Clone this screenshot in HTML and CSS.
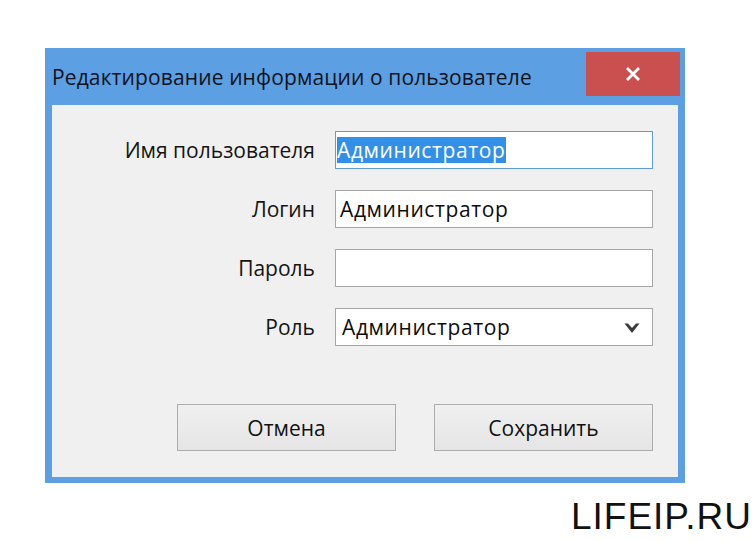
FILE: index.html
```html
<!DOCTYPE html>
<html lang="ru">
<head>
<meta charset="utf-8">
<title>Редактирование информации о пользователе</title>
<link rel="stylesheet" href="styles.css">
</head>
<body>
<div class="window">
  <div class="titlebar">
    <span class="title">Редактирование информации о пользователе</span>
    <div class="close">
      <svg width="14" height="14" viewBox="0 0 14 14"><path d="M2 2 L12 12 M12 2 L2 12" stroke="#ffffff" stroke-width="2.8" stroke-linecap="square" fill="none"/></svg>
    </div>
  </div>
  <div class="client">
    <div class="form">
      <div class="lbl">Имя пользователя</div>
      <div class="field focus"><span class="sel">Администратор</span></div>
      <div class="lbl">Логин</div>
      <div class="field"><span class="val">Администратор</span></div>
      <div class="lbl">Пароль</div>
      <div class="field"></div>
      <div class="lbl">Роль</div>
      <div class="field combo"><span class="val">Администратор</span>
        <svg class="chev" width="16" height="12" viewBox="0 0 16 12"><polygon points="0.5,1.5 4,1.5 8,6 12,1.5 15.5,1.5 8,11" fill="#3c3c3c"/></svg>
      </div>
    </div>
    <div class="buttons">
      <div class="btn">Отмена</div>
      <div class="btn">Сохранить</div>
    </div>
  </div>
</div>
<div class="watermark">LIFEIP.RU</div>
</body>
</html>
```
FILE: styles.css
```css
html, body {
  margin: 0;
  padding: 0;
}
body {
  background: #ffffff;
  font-family: "Open Sans", "Noto Sans", sans-serif;
  width: 752px;
  height: 540px;
  overflow: hidden;
}
.window {
  margin: 48px 0 0 45px;
  width: 640px;
  height: 435px;
  box-sizing: border-box;
  background: #5c9fe2;
  padding: 0 7px 6px 7px;
  display: flex;
  flex-direction: column;
}
.titlebar {
  height: 57px;
  flex: none;
  display: flex;
  align-items: flex-start;
  justify-content: space-between;
}
.title {
  margin-top: 15px;
  font-size: 21px;
  line-height: 28px;
  letter-spacing: 0.12px;
  color: #10131c;
  white-space: nowrap;
}
.close {
  margin-top: 4px;
  margin-right: -2px;
  width: 94px;
  height: 44px;
  background: #c9504e;
  display: flex;
  align-items: center;
  justify-content: center;
}
.client {
  flex: 1;
  background: #f0f0f0;
  padding-top: 26px;
  display: flex;
  flex-direction: column;
}
.form {
  display: grid;
  grid-template-columns: 263px 318px;
  grid-auto-rows: 38px;
  column-gap: 20px;
  row-gap: 21px;
}
.lbl {
  font-size: 21px;
  color: #141414;
  text-align: right;
  display: flex;
  align-items: center;
  justify-content: flex-end;
}
.field {
  box-sizing: border-box;
  background: #ffffff;
  border: 1px solid #a6a6a6;
  display: flex;
  align-items: center;
  font-size: 21px;
  letter-spacing: 0.6px;
  color: #0c0c0c;
}
.field.focus {
  border-color: #5d9bdc;
  padding-left: 1px;
}
.sel {
  background: #3390e8;
  color: #ffffff;
  line-height: 26px;
  padding-right: 1px;
}
.val {
  padding-left: 4px;
}
.combo {
  justify-content: space-between;
  padding-right: 12px;
}
.combo .val {
  padding-left: 6px;
}
.chev {
  margin-top: 2px;
}
.buttons {
  margin-top: 58px;
  margin-left: 125px;
  display: flex;
  gap: 38px;
}
.btn {
  box-sizing: border-box;
  width: 219px;
  height: 47px;
  border: 1px solid #acacac;
  background: linear-gradient(#f0f0f0, #e5e5e5);
  font-size: 21px;
  color: #111;
  display: flex;
  align-items: center;
  justify-content: center;
}
.watermark {
  margin-top: 14px;
  text-align: right;
  font-family: "Liberation Sans", Arial, sans-serif;
  font-size: 37px;
  line-height: 40px;
  letter-spacing: 1px;
  color: #111;
}
```
